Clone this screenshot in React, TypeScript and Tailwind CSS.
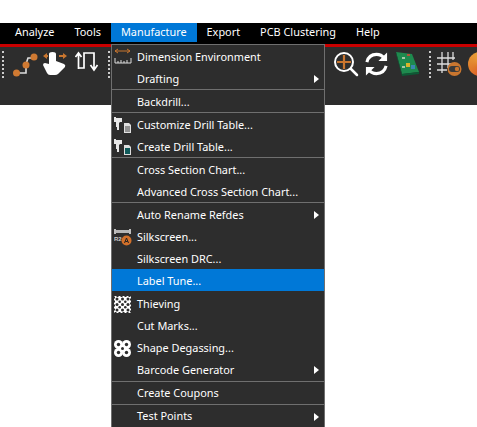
const menuBar = ["Analyze", "Tools", "Manufacture", "Export", "PCB Clustering", "Help"];

const DimensionIcon = () => (
  <svg width="18" height="18" viewBox="0 0 18 18" fill="none">
    <path d="M1 3h15M1 3l3-2M1 3l3 2M16 3l-3-2M16 3l-3 2" stroke="#c9762f" strokeWidth="1" />
    <path d="M1 10v5h16v-5M4 13v2M7 12v3M10 13v2M13 12v3" stroke="#ddd" strokeWidth="1" />
  </svg>
);

const DrillIcon = ({ dark }: { dark?: boolean }) => (
  <svg width="18" height="18" viewBox="0 0 18 18">
    <path d="M0 1h2v1h6v4H6L5 7v7H3v-3H2V6H0z" fill="#e8e8e8" />
    <path d="M10 7h5l2 2v8h-7z" fill={dark ? "#ddd" : "#e0e0e0"} />
    {dark ? <rect x="11" y="10" width="5" height="6" fill="#0f5a5a" /> : <path d="M11 11h5M11 13h5M11 15h5" stroke="#444" />}
  </svg>
);

const SilkIcon = () => (
  <svg width="18" height="18" viewBox="0 0 18 18">
    <path d="M1 1v5M16 1v5" stroke="#eee" strokeWidth="1.500" />
    <rect x="2" y="2" width="13" height="3" fill="#b5b5b5" />
    <text x="0" y="13" fontSize="6" fontWeight="700" fill="#ccc" fontFamily="Liberation Sans, sans-serif">R2</text>
    <circle cx="12.500" cy="12.500" r="5" fill="#d2702a" />
    <path d="M10.500 15l2-5 2 5M11.300 13.500h2.400" stroke="#222" strokeWidth="1" fill="none" />
  </svg>
);

const ThievingIcon = () => (
  <svg width="17" height="17" viewBox="0 0 17 17">
    <rect x="1" y="1" width="15" height="15" fill="#fff" />
    <rect x="0.500" y="0.500" width="16" height="16" fill="none" stroke="#fff" strokeDasharray="2 2" />
    {[3, 8.500, 14].flatMap((x) =>
      [3, 8.500, 14].map((y) => <circle key={`${x}-${y}`} cx={x} cy={y} r="1.500" fill="#2d2d2d" />)
    )}
    {[5.700, 11.300].flatMap((x) =>
      [5.700, 11.300].map((y) => <circle key={`${x}-${y}`} cx={x} cy={y} r="1.300" fill="#2d2d2d" />)
    )}
  </svg>
);

const DegasIcon = () => (
  <svg width="17" height="17" viewBox="0 0 17 17">
    {[4.500, 12.500].flatMap((x) => [4.500, 12.500].map((y) => <circle key={`${x}-${y}`} cx={x} cy={y} r="4.500" fill="#fff" />))}
    <rect x="4" y="4" width="9" height="9" fill="#fff" />
    {[4.500, 12.500].flatMap((x) => [4.500, 12.500].map((y) => <circle key={`${x}-${y}`} cx={x} cy={y} r="1.700" fill="#2d2d2d" />))}
    <circle cx="8.500" cy="8.500" r="1.500" fill="#2d2d2d" />
  </svg>
);

type Row = { label: string; icon?: React.ReactNode; arrow?: boolean; active?: boolean; tall?: boolean };

const groups: Row[][] = [
  [
    { label: "Dimension Environment", icon: <DimensionIcon /> },
    { label: "Drafting", arrow: true },
  ],
  [{ label: "Backdrill..." }],
  [
    { label: "Customize Drill Table...", icon: <DrillIcon /> },
    { label: "Create Drill Table...", icon: <DrillIcon dark /> },
  ],
  [{ label: "Cross Section Chart..." }, { label: "Advanced Cross Section Chart..." }],
  [
    { label: "Auto Rename Refdes", arrow: true },
    { label: "Silkscreen...", icon: <SilkIcon /> },
    { label: "Silkscreen DRC..." },
    { label: "Label Tune...", active: true, tall: true },
    { label: "Thieving", icon: <ThievingIcon /> },
    { label: "Cut Marks..." },
    { label: "Shape Degassing...", icon: <DegasIcon /> },
    { label: "Barcode Generator", arrow: true, tall: true },
  ],
  [{ label: "Create Coupons" }],
  [{ label: "Test Points", arrow: true }],
];

const Dots = () => <div className="h-[27px] border-l-2 border-dotted border-[#ccc]" />;

const Toolbar = () => (
  <div className="h-[58px] bg-[#2d2d2d] flex items-start pt-[4px]">
    <div className="ml-[2px]"><Dots /></div>
    <svg className="ml-[8px]" width="26" height="26" viewBox="0 0 26 26" fill="none">
      <path d="M5 22h9v-9l2-6h8" stroke="#ddd" strokeWidth="1.600" />
      <circle cx="4.500" cy="22" r="3.500" fill="#d07a32" />
      <circle cx="14" cy="14" r="3.500" fill="#d07a32" />
      <circle cx="22" cy="6" r="3.500" fill="#d07a32" />
    </svg>
    <svg className="ml-[5px]" width="24" height="26" viewBox="0 0 24 26">
      <path d="M0 5l4-3v2h1v2H4v2zM24 5l-4-3v2h-4v2h4v2z" fill="#c9762f" />
      <path d="M6 3q0-2 3.500-2t3.500 2v7l8 3q2 1 1 3l-7 7q-1 1-3 1H7q-2 0-3-2L0 14q0-2 2-2l4 1z" fill="#fff" />
    </svg>
    <svg className="ml-[8px]" width="24" height="22" viewBox="0 0 24 22" fill="none">
      <path d="M3.500 18V2M0.500 6l3-4 3 4M3.500 17H9V2h10v17M15.500 14l3.500 5 3.500-5" stroke="#fff" strokeWidth="1.700" />
    </svg>
    <div className="ml-[9px]"><Dots /></div>
    <div className="ml-auto flex items-start">
      <svg width="26" height="26" viewBox="0 0 26 26" fill="none">
        <circle cx="11" cy="11" r="9" stroke="#fff" strokeWidth="2" />
        <path d="M11 4v14M4 11h14" stroke="#c9762f" strokeWidth="2.200" />
        <path d="M18 18l6 6" stroke="#fff" strokeWidth="2.500" strokeLinecap="round" />
      </svg>
      <svg className="ml-[5px]" width="25" height="26" viewBox="0 0 26 26" fill="none">
        <path d="M3 11q2-8 10-8 5 0 8 4M23 15q-2 8-10 8-5 0-8-4" stroke="#fff" strokeWidth="3.200" />
        <path d="M24 1v9h-9zM2 25v-9h9z" fill="#fff" />
      </svg>
      <svg className="ml-[6px]" width="25" height="26" viewBox="0 0 25 26">
        <path d="M1 1l16 2 7 18-17 2z" fill="#1e8a4e" />
        <path d="M7 23l17-2v2l-17 2z" fill="#0d5a35" />
        <path d="M1 1l6 22v2L1 3z" fill="#0d5a35" />
        <rect x="11" y="12" width="4" height="4" fill="#d8b32a" />
        <rect x="7" y="6" width="3" height="2" fill="#a5c7a8" />
        <rect x="16" y="14" width="4" height="4" fill="#3a88b0" />
        <rect x="12" y="3" width="3" height="2" fill="#b3553a" />
        <rect x="7" y="15" width="3" height="2" fill="#a5c7a8" />
      </svg>
      <div className="ml-[9px]"><Dots /></div>
      <svg className="ml-[6px]" width="25" height="26" viewBox="0 0 25 26" fill="none">
        <path d="M0 7h18M0 13h18M0 19h10M5 1v21M11 1v16M16 1v8" stroke="#ddd" strokeWidth="1.300" />
        <circle cx="17.500" cy="18" r="7" fill="#c9762f" />
        <rect x="12" y="15" width="11" height="6" rx="3" fill="#3a3a3a" />
        <circle cx="20" cy="18" r="2.200" fill="#c9762f" />
      </svg>
      <div className="ml-[6px] w-[9px] h-[26px] overflow-hidden">
        <div className="w-[24px] h-[24px] mt-[1px] rounded-full bg-[conic-gradient(#e8a33a,#d8442c,#e07a2a,#e8a33a)]" />
      </div>
    </div>
  </div>
);

const App = () => {
  return (
    <div className="relative w-[477px] h-[427px] overflow-hidden bg-white text-white font-['Noto_Sans',sans-serif] text-[10.9px]">
      <div className="h-[23px]" />
      <div className="h-[21px] bg-black flex pl-[5px] pb-[2px]">
        {menuBar.map((m) => (
          <div
            key={m}
            className={`h-[19px] flex items-center px-[10px] ${m === "Manufacture" ? "bg-[#0078d7]" : ""}`}
          >
            {m}
          </div>
        ))}
      </div>
      <div className="h-[3px] bg-[#c90000]" />
      <Toolbar />

      <div className="absolute left-[111px] top-[44px] w-[214px] h-[383px] bg-[#2d2d2d] border-t border-l border-r border-[#6f6f6f]">
        {groups.map((g, i) => (
          <div key={i} className={i > 0 ? "border-t border-[#6f6f6f]" : ""}>
            {g.map((r) => (
              <div key={r.label} className={r.tall ? "h-[23px]" : "h-[22px]"}>
                <div className={`flex items-center h-[22px] ${i < 5 ? "pt-[2px]" : "pt-[1px]"} ${r.active ? "bg-[#0078d7]" : ""}`}>
                  <div className="w-[25px] flex items-center pl-[2px]">{r.icon}</div>
                  <span>{r.label}</span>
                  {r.arrow && (
                    <span className="ml-auto mr-[5px] w-0 h-0 border-y-[4px] border-y-transparent border-l-[5px] border-l-white" />
                  )}
                </div>
              </div>
            ))}
          </div>
        ))}
      </div>
    </div>
  );
};

export default App;
